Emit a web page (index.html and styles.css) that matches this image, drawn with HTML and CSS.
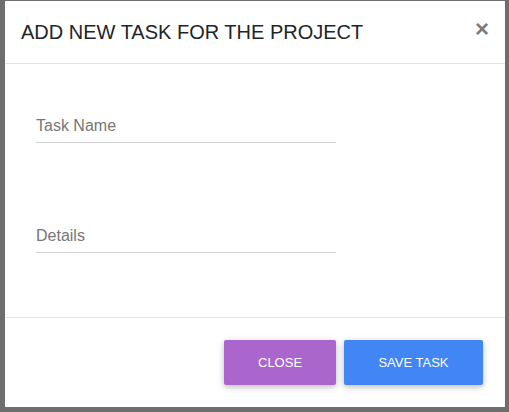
FILE: index.html
```html
<!DOCTYPE html>
<html lang="en">
<head>
<meta charset="utf-8">
<title>Add new task</title>
<link rel="stylesheet" href="styles.css">
</head>
<body>
<div class="backdrop">
  <div class="modal">
    <div class="modal-header">
      <h4 class="modal-title">ADD NEW TASK FOR THE PROJECT</h4>
      <button class="close" type="button" aria-label="Close">×</button>
    </div>
    <div class="modal-body">
      <div class="field"><input type="text" placeholder="Task Name"></div>
      <div class="field"><input type="text" placeholder="Details"></div>
    </div>
    <div class="modal-footer">
      <button class="btn btn-secondary" type="button">CLOSE</button>
      <button class="btn btn-primary" type="button">SAVE TASK</button>
    </div>
  </div>
</div>
</body>
</html>
```

FILE: styles.css
```css
html, body {
  margin: 0;
  padding: 0;
  width: 509px;
  height: 412px;
  overflow: hidden;
  background: #6e6e6e;
  font-family: "Liberation Sans", Arial, sans-serif;
}

.backdrop {
  padding: 1px 4px 0 5px;
}

.modal {
  width: 500px;
  height: 406px;
  background: #fff;
  display: flex;
  flex-direction: column;
}

.modal-header {
  display: flex;
  justify-content: space-between;
  align-items: flex-start;
  padding: 16px 16px 16px 16px;
  border-bottom: 1px solid #e3e3e3;
}

.modal-title {
  margin: 0;
  font-size: 20px;
  font-weight: 400;
  line-height: 30px;
  color: #212529;
}

.close {
  border: 0;
  background: transparent;
  padding: 0;
  margin: 0;
  font-family: "Liberation Sans", Arial, sans-serif;
  font-size: 24px;
  font-weight: 700;
  line-height: 24px;
  color: #7d7d7d;
}

.modal-body {
  display: flex;
  flex-direction: column;
  gap: 81px;
  padding: 50px 31px 0 31px;
  flex: 1;
}

.field {
  width: 300px;
  border-bottom: 1px solid #cfcfcf;
  padding-bottom: 4px;
}

.field input {
  display: block;
  width: 100%;
  box-sizing: border-box;
  border: 0;
  outline: 0;
  padding: 0;
  margin: 0;
  height: 24px;
  font-family: "Liberation Sans", Arial, sans-serif;
  font-size: 16px;
  line-height: 24px;
  color: #495057;
  background: transparent;
}

.field input::placeholder {
  color: #767676;
  opacity: 1;
}

.modal-footer {
  display: flex;
  justify-content: flex-end;
  gap: 8px;
  padding: 22px 22px 22px 22px;
  border-top: 1px solid #e3e3e3;
}

.btn {
  height: 45px;
  border: 0;
  border-radius: 2px;
  padding: 0 34px;
  font-family: "Liberation Sans", Arial, sans-serif;
  font-size: 13px;
  color: #fff;
  box-shadow: 0 2px 5px 0 rgba(0,0,0,.16), 0 2px 10px 0 rgba(0,0,0,.12);
}

.btn-secondary {
  background: #aa66cc;
  width: 112px;
}

.btn-primary {
  background: #4285f4;
  width: 139px;
}
```
